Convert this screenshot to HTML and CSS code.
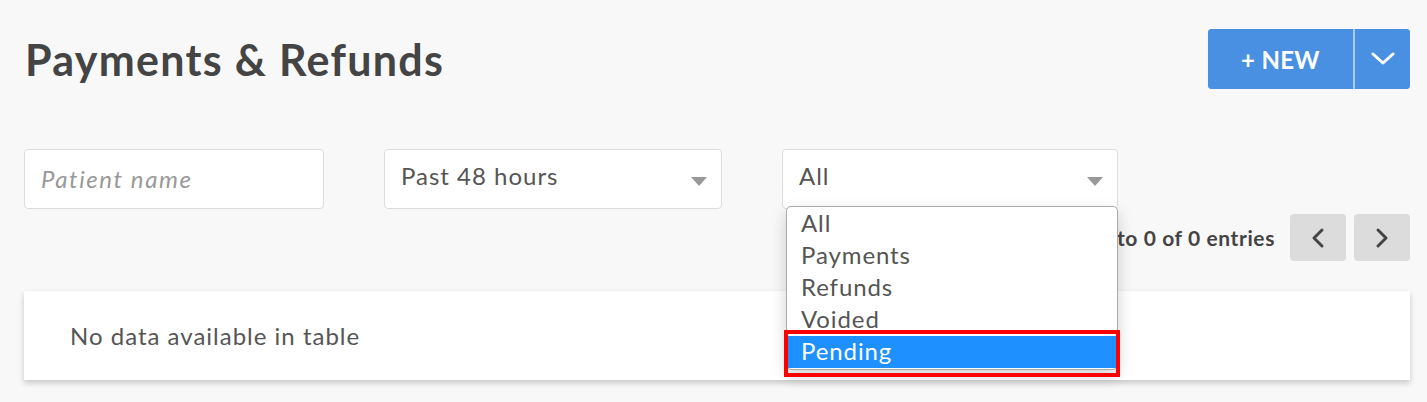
FILE: index.html
```html
<!DOCTYPE html>
<html>
<head>
<meta charset="utf-8">
<link rel="stylesheet" href="styles.css">
</head>
<body>
<div class="page">
  <div class="header">
    <h1 class="title">Payments &amp; Refunds</h1>
    <div class="btn-group">
      <button class="btn-new">+ NEW</button>
      <button class="btn-caret">
        <svg width="24" height="14" viewBox="0 0 24 14"><path d="M2 2 L12 11 L22 2" fill="none" stroke="#fff" stroke-width="3" stroke-linecap="round" stroke-linejoin="round"/></svg>
      </button>
    </div>
  </div>
  <div class="filters">
    <div class="field f-name"><span class="placeholder">Patient name</span></div>
    <div class="field f-period"><span class="value">Past 48 hours</span><span class="arrow"></span></div>
    <div class="field f-type"><span class="value">All</span><span class="arrow"></span>
      <div class="dropdown">
        <div class="opt">All</div>
        <div class="opt">Payments</div>
        <div class="opt">Refunds</div>
        <div class="opt">Voided</div>
        <div class="opt selected">Pending</div>
      </div>
      <div class="mark"></div>
    </div>
  </div>
  <div class="pager">
    <span class="info">Showing 0 to 0 of 0 entries</span>
    <button class="pg">
      <svg width="14" height="22" viewBox="0 0 14 22"><path d="M11 3 L3 11 L11 19" fill="none" stroke="#444" stroke-width="3" stroke-linecap="round" stroke-linejoin="round"/></svg>
    </button>
    <button class="pg">
      <svg width="14" height="22" viewBox="0 0 14 22"><path d="M3 3 L11 11 L3 19" fill="none" stroke="#444" stroke-width="3" stroke-linecap="round" stroke-linejoin="round"/></svg>
    </button>
  </div>
  <div class="card">
    <div class="empty">No data available in table</div>
  </div>
</div>
</body>
</html>
```
FILE: styles.css
```css
* { box-sizing: border-box; }
html, body { margin: 0; padding: 0; }
body {
  background: #f8f8f8;
  font-family: "Lato", "Liberation Sans", sans-serif;
  color: #555;
  width: 1427px;
  height: 402px;
  overflow: hidden;
}
.page {
  padding: 29px 17px 0 24px;
}
.header {
  display: flex;
  justify-content: space-between;
  align-items: center;
  height: 60px;
}
.title {
  margin: 0;
  font-size: 43px;
  font-weight: 700;
  color: #444;
  letter-spacing: 1.3px;
  padding-left: 1px;
}
.btn-group {
  display: flex;
  height: 60px;
  background: #4a90e2;
  border-radius: 4px;
  overflow: hidden;
}
.btn-new, .btn-caret {
  border: 0;
  background: #4a90e2;
  color: #fff;
  font-family: inherit;
  font-weight: 700;
  font-size: 24px;
  letter-spacing: 0.3px;
  padding: 0;
  cursor: pointer;
}
.btn-new { width: 145px; }
.btn-caret {
  width: 57px;
  border-left: 2px solid #a8c8ef;
  display: flex;
  align-items: center;
  justify-content: center;
}
.filters {
  display: flex;
  gap: 60px;
  margin-top: 60px;
  height: 60px;
}
.field {
  position: relative;
  background: #fff;
  border: 1px solid #ddd;
  border-radius: 4px;
  height: 60px;
  display: flex;
  align-items: center;
  padding-left: 16px;
  font-size: 24px;
  letter-spacing: 1px;
}
.f-name { width: 300px; padding-bottom: 1px; }
.f-period { width: 338px; }
.f-type { width: 336px; }
.f-period, .f-type { padding-bottom: 8px; }
.placeholder { color: #999; font-style: italic; letter-spacing: 1.6px; }
.value { color: #555; }
.arrow {
  position: absolute;
  right: 14px;
  top: 27px;
  width: 0;
  height: 0;
  border-left: 8px solid transparent;
  border-right: 8px solid transparent;
  border-top: 9px solid #999;
}
.dropdown {
  position: absolute;
  left: 3px;
  top: 56px;
  width: 332px;
  background: #fff;
  border: 1px solid #aaa;
  border-radius: 5px;
  padding: 1px;
  box-shadow: 0 6px 16px rgba(0,0,0,0.18);
  z-index: 5;
}
.opt {
  height: 32px;
  line-height: 30px;
  padding-left: 13px;
  color: #555;
  font-size: 24px;
  letter-spacing: 0.9px;
}
.opt.selected {
  background: #1e90ff;
  color: #fff;
}
.mark {
  position: absolute;
  left: 1px;
  top: 180px;
  width: 336px;
  height: 47px;
  border: 4px solid #ff0000;
  z-index: 6;
}
.pager {
  display: flex;
  justify-content: flex-end;
  align-items: center;
  gap: 8px;
  margin-top: 5px;
  height: 47px;
}
.info {
  font-size: 21px;
  font-weight: 700;
  color: #444;
  letter-spacing: 0.6px;
  margin-right: 7px;
}
.pg {
  width: 56px;
  height: 47px;
  border: 0;
  border-radius: 4px;
  background: #dcdcdc;
  display: flex;
  align-items: center;
  justify-content: center;
  padding: 0;
}
.card {
  margin-top: 30px;
  height: 89px;
  background: #fff;
  box-shadow: 0 3px 6px rgba(0,0,0,0.2);
  display: flex;
  align-items: center;
  padding-left: 46px;
}
.empty {
  font-size: 24px;
  letter-spacing: 1px;
  color: #555;
}
```
